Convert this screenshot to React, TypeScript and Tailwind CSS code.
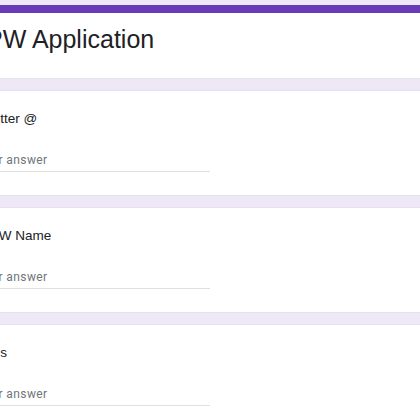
import React from 'react';

const questions = [
  { label: 'Twitter @' },
  { label: 'RPW Name' },
  { label: 'OCs' },
];

function Question({ label }: { label: string }) {
  return (
    <div className="h-[106px] shrink-0 bg-white border-y border-[#e6e0f3] pt-[18px]">
      <div className="-ml-[20px]">
        <div className="font-['Liberation_Sans',Arial,sans-serif] text-[13.5px] leading-[20px] text-[#202124]">
          {label}
        </div>
        <div className="mt-[23px] -ml-[3px] w-[233px] border-b border-[#e0e0e0] pb-[3px] text-[12px] leading-[16px] tracking-[0.4px] text-[#70757a]">
          Your answer
        </div>
      </div>
    </div>
  );
}

export default function App() {
  return (
    <div
      className="h-[420px] w-[420px] overflow-hidden bg-[#ede7f6] pt-[5px]"
      style={{ fontFamily: 'Roboto, Arial, sans-serif' }}
    >
      <div className="flex flex-col gap-[11px]">
        <div>
          <div className="h-[8px] bg-[#673ab7]" />
          <div className="h-[66px] bg-white border-b border-[#e6e0f3] pt-[10px]">
            <div className="-ml-[32px] font-['Liberation_Sans',Arial,sans-serif] text-[25px] leading-[32px] text-[#202124]">
              RPW Application
            </div>
          </div>
        </div>
        {questions.map((q) => (
          <Question key={q.label} label={q.label} />
        ))}
      </div>
    </div>
  );
}
